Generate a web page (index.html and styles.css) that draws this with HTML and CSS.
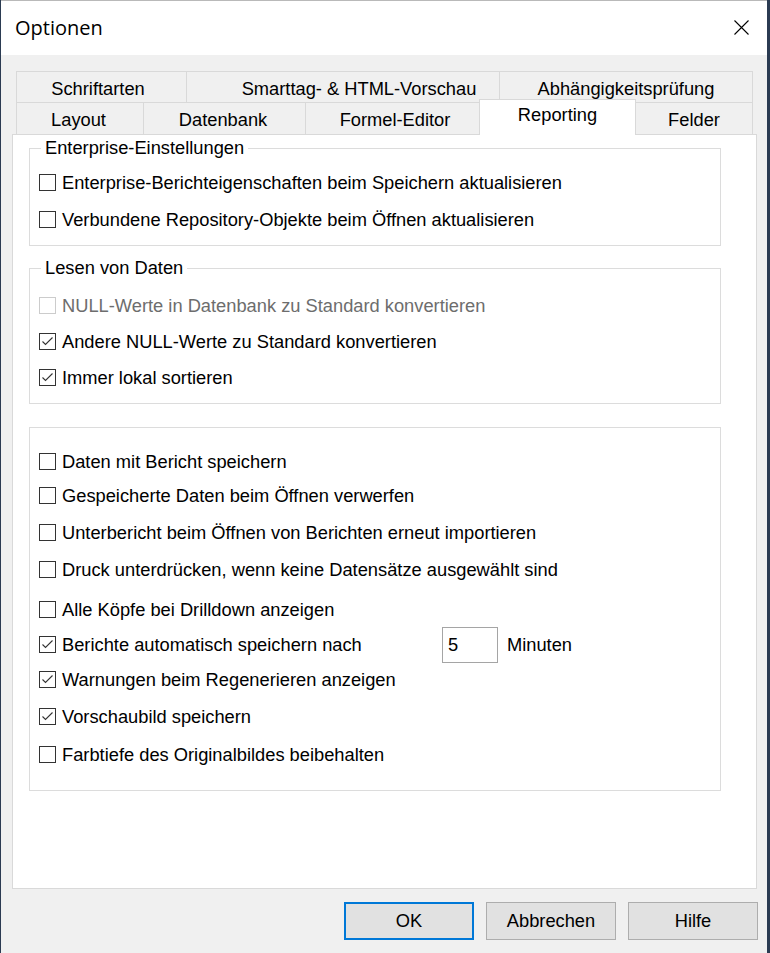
FILE: index.html
```html
<!DOCTYPE html>
<html lang="de">
<head>
<meta charset="utf-8">
<title>Optionen</title>
<link rel="stylesheet" href="styles.css">
</head>
<body>
<div class="window">
  <div class="titlebar">
    <span class="title">Optionen</span>
    <svg class="close" width="15" height="15" viewBox="0 0 15 15"><path d="M0.5 0.5 L14.5 14.5 M14.5 0.5 L0.5 14.5" stroke="#000" stroke-width="1.1" fill="none"/></svg>
  </div>

  <div class="tabs">
    <div class="tabrow row-back">
      <div class="tab w170 nudge-l">Schriftarten</div>
      <div class="tab w313 shift">Smarttag- &amp; HTML-Vorschau</div>
      <div class="tab w254 last">Abhängigkeitsprüfung</div>
    </div>
    <div class="tabrow row-front">
      <div class="tab w127 nudge-s">Layout</div>
      <div class="tab w162 nudge-s">Datenbank</div>
      <div class="tab w174 nudge-r">Formel-Editor</div>
      <div class="tab w157 selected">Reporting</div>
      <div class="tab w117 last">Felder</div>
    </div>
  </div>

  <div class="panel">
    <fieldset class="group g1">
      <legend>Enterprise-Einstellungen</legend>
      <div class="rows r-g1">
        <div class="row"><span class="cb"></span><span class="lbl">Enterprise-Berichteigenschaften beim Speichern aktualisieren</span></div>
        <div class="row"><span class="cb"></span><span class="lbl">Verbundene Repository-Objekte beim Öffnen aktualisieren</span></div>
      </div>
    </fieldset>

    <fieldset class="group g2">
      <legend>Lesen von Daten</legend>
      <div class="rows r-g2">
        <div class="row disabled"><span class="cb"></span><span class="lbl">NULL-Werte in Datenbank zu Standard konvertieren</span></div>
        <div class="row m19"><span class="cb"><svg width="15" height="15" viewBox="0 0 15 15"><polyline points="2.5,7.5 5.5,10.5 12.5,3.5" fill="none" stroke="#333" stroke-width="1.1"/></svg></span><span class="lbl">Andere NULL-Werte zu Standard konvertieren</span></div>
        <div class="row m19"><span class="cb"><svg width="15" height="15" viewBox="0 0 15 15"><polyline points="2.5,7.5 5.5,10.5 12.5,3.5" fill="none" stroke="#333" stroke-width="1.1"/></svg></span><span class="lbl">Immer lokal sortieren</span></div>
      </div>
    </fieldset>

    <div class="group g3">
      <div class="rows r-g3">
        <div class="row"><span class="cb"></span><span class="lbl">Daten mit Bericht speichern</span></div>
        <div class="row m17"><span class="cb"></span><span class="lbl">Gespeicherte Daten beim Öffnen verwerfen</span></div>
        <div class="row"><span class="cb"></span><span class="lbl">Unterbericht beim Öffnen von Berichten erneut importieren</span></div>
        <div class="row"><span class="cb"></span><span class="lbl">Druck unterdrücken, wenn keine Datensätze ausgewählt sind</span></div>
        <div class="row m23"><span class="cb"></span><span class="lbl">Alle Köpfe bei Drilldown anzeigen</span></div>
        <div class="row m18"><span class="cb"><svg width="15" height="15" viewBox="0 0 15 15"><polyline points="2.5,7.5 5.5,10.5 12.5,3.5" fill="none" stroke="#333" stroke-width="1.1"/></svg></span><span class="lbl wide">Berichte automatisch speichern nach</span><span class="num">5</span><span class="unit">Minuten</span></div>
        <div class="row m18"><span class="cb"><svg width="15" height="15" viewBox="0 0 15 15"><polyline points="2.5,7.5 5.5,10.5 12.5,3.5" fill="none" stroke="#333" stroke-width="1.1"/></svg></span><span class="lbl">Warnungen beim Regenerieren anzeigen</span></div>
        <div class="row"><span class="cb"><svg width="15" height="15" viewBox="0 0 15 15"><polyline points="2.5,7.5 5.5,10.5 12.5,3.5" fill="none" stroke="#333" stroke-width="1.1"/></svg></span><span class="lbl">Vorschaubild speichern</span></div>
        <div class="row m21"><span class="cb"></span><span class="lbl">Farbtiefe des Originalbildes beibehalten</span></div>
      </div>
    </div>
  </div>

  <div class="buttons">
    <div class="btn default">OK</div>
    <div class="btn">Abbrechen</div>
    <div class="btn">Hilfe</div>
  </div>
</div>
</body>
</html>
```
FILE: styles.css
```css
html, body {
  margin: 0;
  padding: 0;
  height: 100%;
}

body {
  background: #2b3b52;
  font-family: "Liberation Sans", Arial, sans-serif;
  font-size: 18.3px;
  color: #000;
  overflow: hidden;
}

.window {
  width: 767px;
  height: 953px;
  box-sizing: border-box;
  border-left: 1px solid #2b3b52;
  background: #f0f0f0;
}

/* Title bar */
.titlebar {
  height: 55px;
  box-sizing: border-box;
  background: #fff;
  border-top: 1px solid #b9b9b9;
  padding: 13px 18px 0 14px;
  display: flex;
  justify-content: space-between;
  align-items: flex-start;
}

.title {
  font-family: "Open Sans", "Noto Sans", sans-serif;
  font-size: 20px;
  line-height: 28px;
}

.close {
  margin-top: 6px;
  display: block;
}

/* Tabs */
.tabs {
  margin: 16px 0 0 15px;
  width: 737px;
}

.tabrow {
  display: flex;
}

.row-back {
  height: 31px;
}

.row-front {
  height: 32px;
}

.tab {
  box-sizing: border-box;
  border-top: 1px solid #d9d9d9;
  border-left: 1px solid #d9d9d9;
  background: #f0f0f0;
  text-align: center;
  white-space: nowrap;
}

.row-back .tab {
  padding-top: 3px;
  line-height: 27px;
}

.row-front .tab {
  padding-top: 2px;
  line-height: 29px;
}

.tab.last {
  border-right: 1px solid #d9d9d9;
}

.tab.shift {
  padding-left: 32px;
}

.tab.nudge-l {
  padding-right: 7px;
}

.tab.nudge-s {
  padding-right: 3px;
}

.tab.nudge-r {
  padding-left: 5px;
}

.tab.selected {
  position: relative;
  z-index: 1;
  background: #fff;
  height: 36px;
  margin-top: -3px;
  margin-bottom: -1px;
  padding-top: 0;
  line-height: 30px;
  border-right: 1px solid #d9d9d9;
}

.tab.selected + .tab {
  border-left: none;
}

.w170 { width: 170px; }
.w313 { width: 313px; }
.w254 { width: 254px; }
.w127 { width: 127px; }
.w162 { width: 162px; }
.w174 { width: 174px; }
.w157 { width: 157px; }
.w117 { width: 117px; }

/* Panel */
.panel {
  margin-left: 11px;
  width: 745px;
  height: 755px;
  box-sizing: border-box;
  background: #fff;
  border: 1px solid #d9d9d9;
  overflow: hidden;
}

.group {
  margin: 0 0 0 16px;
  width: 692px;
  box-sizing: border-box;
  border: 1px solid #dcdcdc;
  padding: 0;
  min-width: 0;
}

.g1 { margin-top: 3px; }
.g2 { margin-top: 12px; }
.g3 { margin-top: 23px; }

legend {
  margin-left: 11px;
  padding: 0 4px;
  line-height: 20px;
  font-size: 18.3px;
}

.rows {
  padding-left: 9px;
}

.r-g1 { padding-top: 16px; padding-bottom: 17px; }
.r-g2 { padding-top: 19px; padding-bottom: 17px; }
.r-g3 { padding-top: 25px; padding-bottom: 27px; }

.row {
  display: flex;
  align-items: center;
  height: 17px;
  line-height: 17px;
  white-space: nowrap;
}

.row + .row { margin-top: 20px; }
.row.m17 { margin-top: 17px; }
.row.m18 { margin-top: 18px; }
.row.m19 { margin-top: 19px; }
.row.m21 { margin-top: 21px; }
.row.m23 { margin-top: 23px; }

.cb {
  flex: none;
  width: 17px;
  height: 17px;
  box-sizing: border-box;
  border: 1px solid #333;
  background: #fff;
  margin-right: 6px;
  display: flex;
  align-items: center;
  justify-content: center;
}

.cb svg { display: block; }

.disabled .cb { border-color: #cccccc; }
.disabled .lbl { color: #6d6d6d; }

.lbl.wide { width: 380px; }

.num {
  flex: none;
  width: 56px;
  height: 36px;
  margin: -10px 0;
  box-sizing: border-box;
  border: 1px solid #a5a5a5;
  background: #fff;
  padding-left: 5px;
  line-height: 34px;
}

.unit { margin-left: 9px; }

/* Buttons */
.buttons {
  display: flex;
  justify-content: flex-end;
  gap: 12px;
  margin: 13px 9px 0 0;
}

.btn {
  width: 130px;
  height: 38px;
  box-sizing: border-box;
  border: 1px solid #adadad;
  background: #e1e1e1;
  display: flex;
  align-items: center;
  justify-content: center;
}

.btn.default {
  border: 2px solid #0078d7;
}
```
